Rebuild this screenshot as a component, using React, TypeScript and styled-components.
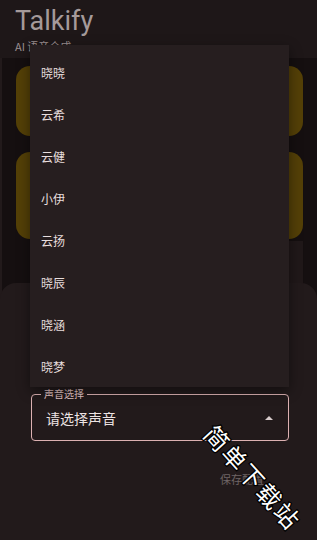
import React from "react";
import styled, { createGlobalStyle } from "styled-components";

const GlobalStyle = createGlobalStyle`
  body {
    margin: 0;
    background: #150f10;
    font-family: "Noto Sans CJK SC", "Noto Sans", sans-serif;
  }
`;

const voices = ["晓晓", "云希", "云健", "小伊", "云扬", "晓辰", "晓涵", "晓梦"];

export default function App() {
  return (
    <>
      <GlobalStyle />
      <Page>
        <Header>
          <Title>Talkify</Title>
          <Subtitle>AI 语音合成</Subtitle>
        </Header>
        <Content>
          <Card $height={70} />
          <Card $height={87} />
          <GreyCard />
        </Content>

        <Sheet>
          <SelectField>
            <FieldLabel>声音选择</FieldLabel>
            <FieldValue>请选择声音</FieldValue>
            <Arrow />
          </SelectField>
          <ButtonRow>
            <SaveButton>保存配置</SaveButton>
          </ButtonRow>
        </Sheet>

        <Menu>
          {voices.map((v) => (
            <MenuItem key={v}>{v}</MenuItem>
          ))}
        </Menu>

        <Watermark>简单下载站</Watermark>
      </Page>
    </>
  );
}

const Page = styled.div`
  position: relative;
  width: 317px;
  height: 540px;
  overflow: hidden;
  background: #150f10;
  box-shadow: inset 2px 0 0 #221a1b;
`;

const Header = styled.div`
  height: 58px;
  background: #1e1718;
  padding: 6px 0 0 15px;
  box-sizing: border-box;
`;

const Title = styled.div`
  font-family: Roboto, "Noto Sans", sans-serif;
  font-size: 27px;
  line-height: 31px;
  color: #a59a9a;
`;

const Subtitle = styled.div`
  margin-top: 2px;
  font-size: 11px;
  line-height: 14px;
  color: #9c9091;
`;

const Content = styled.div`
  display: flex;
  flex-direction: column;
  gap: 16px;
  padding: 8px 14px 0 16px;
`;

const Card = styled.div<{ $height: number }>`
  height: ${(p) => p.$height}px;
  border-radius: 14px;
  background: #544007;
`;

const GreyCard = styled.div`
  height: 60px;
  margin: -14px 0 0 14px;
  background: #201819;
`;

const Sheet = styled.div`
  position: absolute;
  left: 0;
  right: 0;
  top: 283px;
  bottom: 0;
  background: #221a1b;
  border-radius: 16px 16px 0 0;
  padding: 111px 28px 0 31px;
`;

const SelectField = styled.div`
  position: relative;
  height: 47px;
  border: 1.5px solid #dcb1b2;
  border-radius: 4px;
  display: flex;
  align-items: center;
  padding: 0 14px;
  box-sizing: border-box;
`;

const FieldLabel = styled.span`
  position: absolute;
  left: 9px;
  top: -8px;
  padding: 0 3px;
  font-size: 10px;
  line-height: 14px;
  color: #e3c4c4;
  background: #221a1b;
`;

const FieldValue = styled.span`
  flex: 1;
  font-size: 14px;
  color: #ede3e3;
`;

const Arrow = styled.span`
  width: 0;
  height: 0;
  border-left: 4px solid transparent;
  border-right: 4px solid transparent;
  border-bottom: 4px solid #d8cccc;
  margin-right: 1px;
`;

const ButtonRow = styled.div`
  display: flex;
  justify-content: flex-end;
  padding: 30px 0 0 0;
`;

const SaveButton = styled.div`
  font-size: 11px;
  line-height: 16px;
  color: #6f6566;
  margin-right: 25px;
`;

const Menu = styled.div`
  position: absolute;
  left: 30px;
  top: 45px;
  width: 259px;
  padding-top: 6px;
  background: #261e1f;
  box-shadow: 0 4px 12px rgba(0, 0, 0, 0.45);
`;

const MenuItem = styled.div`
  height: 42px;
  display: flex;
  align-items: center;
  padding-left: 11px;
  font-size: 12px;
  color: #e8dede;
`;

const Watermark = styled.div`
  position: absolute;
  left: 188px;
  top: 464px;
  transform: rotate(48deg);
  transform-origin: center;
  font-size: 24px;
  line-height: 26px;
  font-weight: 400;
  letter-spacing: 2px;
  color: #ffffff;
  -webkit-text-stroke: 2.5px #000;
  paint-order: stroke fill;
  white-space: nowrap;
`;
